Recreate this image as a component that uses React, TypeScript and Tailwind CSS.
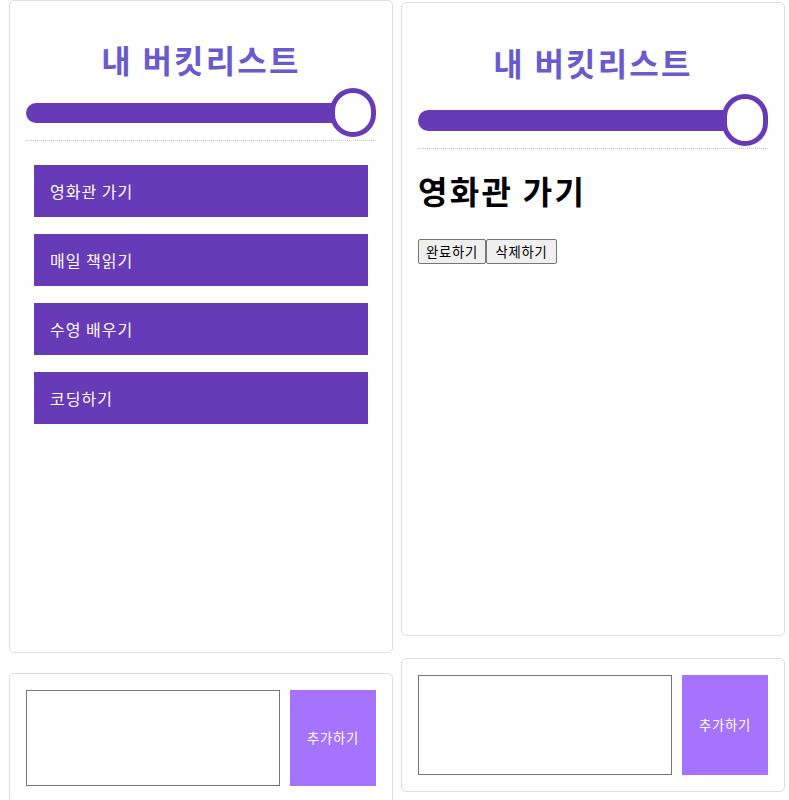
import React from "react";

const items = ["영화관 가기", "매일 책읽기", "수영 배우기", "코딩하기"];

const font = { fontFamily: '"Noto Sans CJK KR", "Noto Sans", sans-serif' };

const Progress: React.FC<{ track: string; knob: string }> = ({ track, knob }) => (
  <div className="flex items-center">
    <div className={`flex-1 ${track} rounded-l-full bg-[#673ab7]`} />
    <div className={`${knob} -ml-[20px] shrink-0 rounded-full border-[5px] border-[#673ab7] bg-white`} />
  </div>
);

const InputBox: React.FC<{ area: string; className?: string }> = ({ area, className }) => (
  <div className={`flex rounded-[5px] border border-[#ddd] p-4 ${className ?? ""}`}>
    <textarea className={`w-[254px] ${area} resize-none border border-[#767676] bg-white`} />
    <button className={`ml-[10px] w-[86px] ${area} bg-[#a673ff] text-[13.33px] tracking-[0.8px] text-white`}>
      추가하기
    </button>
  </div>
);

export default function App() {
  return (
    <div className="flex items-start gap-[8px] pl-[9px] text-black" style={font}>
      {/* list page */}
      <div className="flex w-[384px] flex-col">
        <div className="h-[653px] rounded-[5px] border border-[#ddd] p-4">
          <div className="border-b border-dotted border-[#ccc] pb-[3px]">
            <h1 className="mt-[18px] text-center text-[32px] font-bold leading-[48px] tracking-[2.2px] text-[#6a5acd]">
              내 버킷리스트
            </h1>
            <div className="mt-[5px]">
              <Progress track="h-5" knob="h-[49px] w-[46px]" />
            </div>
          </div>
          <div className="mx-2 mt-6 flex flex-col gap-[17px]">
            {items.map((t) => (
              <div
                key={t}
                className="flex h-[52px] items-center bg-[#673ab7] px-4 text-base tracking-[1px] text-white"
              >
                {t}
              </div>
            ))}
          </div>
        </div>
        <InputBox area="h-[96px]" className="mt-[20px]" />
      </div>

      {/* detail page */}
      <div className="mt-[2px] flex w-[384px] flex-col">
        <div className="h-[634px] rounded-[5px] border border-[#ddd] p-4">
          <div className="border-b border-dotted border-[#ccc] pb-[2px]">
            <h1 className="mt-[19px] text-center text-[32px] font-bold leading-[48px] tracking-[2.2px] text-[#6a5acd]">
              내 버킷리스트
            </h1>
            <div className="mt-[8px]">
              <Progress track="h-[21px]" knob="h-[52px] w-[46px]" />
            </div>
          </div>
          <h1 className="mt-[17px] text-[32px] font-bold leading-[48px] tracking-[2.3px]">영화관 가기</h1>
          <div className="mt-[25px] flex">
            <button className="h-[25px] w-[68px] rounded-[2px] border border-[#767676] bg-[#efefef] text-[13.33px] tracking-[0.7px]">
              완료하기
            </button>
            <button className="h-[25px] w-[71px] rounded-[2px] border border-[#767676] bg-[#efefef] text-[13.33px] tracking-[0.7px]">
              삭제하기
            </button>
          </div>
        </div>
        <InputBox area="h-[100px]" className="mt-[22px]" />
      </div>
    </div>
  );
}
